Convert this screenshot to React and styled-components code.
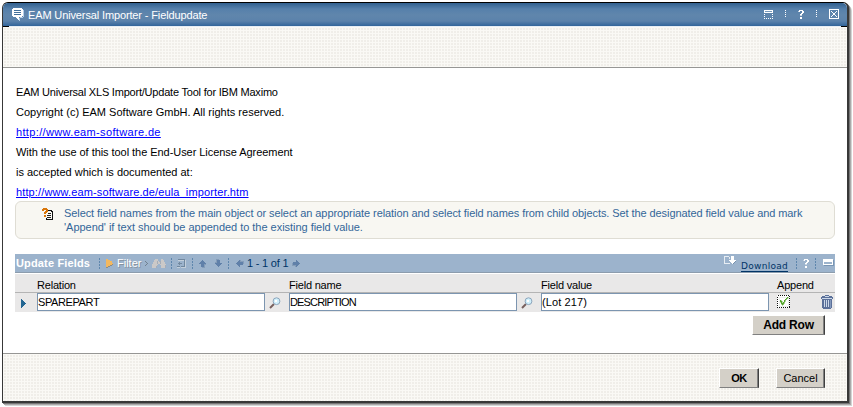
import React from "react";
import styled, { createGlobalStyle } from "styled-components";

const Global = createGlobalStyle`
  *, *::before, *::after { box-sizing: border-box; }
  body { margin: 0; background: #fff; overflow: hidden; }
  svg { display: block; flex: none; }
`;

const Page = styled.div`
  width: 853px;
  height: 407px;
  padding: 2px 0 0 2px;
  font: 11px/20px "Liberation Sans", Arial, sans-serif;
  color: #000;
`;

const Dialog = styled.div`
  width: 847px;
  height: 401px;
  display: flex;
  flex-direction: column;
  border: solid #383838;
  border-width: 1px 2px 2px 1px;
  border-top-color: #000;
  border-radius: 6px 6px 0 0;
  background: #fff;
  box-shadow: 1px 1px 0 #777, 2px 2px 0 #aaa, 3px 3px 0 #d4d4d4;
`;

const TitleBar = styled.header`
  height: 24px;
  flex: none;
  display: flex;
  align-items: center;
  padding: 0 8px 1px 9px;
  border-radius: 5px 5px 0 0;
  background:
    linear-gradient(#000, #000) 0 100% / 6px 1px no-repeat,
    linear-gradient(#000, #000) 100% 100% / 6px 1px no-repeat,
    linear-gradient(#e6edf4, #e6edf4) 0 100% / 100% 1px no-repeat,
    linear-gradient(#31608f 0, #5680ab 25%, #6086ac 50%, #5b82ab 75%, #31649a 96%);
  color: #fff;
`;

const Title = styled.span`
  flex: 1;
  margin-left: 4px;
  white-space: nowrap;
  letter-spacing: -0.13px;
`;

const TitleActions = styled.div`
  display: flex;
  align-items: center;
  gap: 12px;
  margin-bottom: 1px;
`;

const Band = styled.div`
  flex: none;
  height: ${(p) => p.$height}px;
  display: flex;
  justify-content: flex-end;
  gap: 17px;
  padding: ${(p) => p.$padding || "0"};
  border: 0 solid #969694;
  border-top-width: ${(p) => (p.$footer ? 1 : 0)}px;
  border-bottom-width: ${(p) => (p.$footer ? 0 : 1)}px;
  background-color: #f0eee9;
  background-image: linear-gradient(90deg, #faf9f5 1px, transparent 1px),
    linear-gradient(#faf9f5 1px, transparent 1px);
  background-size: 3px 3px;
`;

const Content = styled.main`
  flex: 1;
  padding: 14px 12px 0 12px;
`;

const Line = styled.div`
  height: 20px;
  padding-left: 1px;
  white-space: nowrap;
  letter-spacing: ${(p) => p.$spacing || 0}px;
`;

const Link = styled.a`
  color: #00f;
  text-decoration: underline;
  text-underline-offset: 1px;
`;

const Hint = styled.section`
  width: 820px;
  height: 38px;
  margin-top: -1px;
  display: flex;
  border: 1px solid #dfddd4;
  border-radius: 6px;
  background: #f8f7f2;
  padding: 4px 0 0 26px;
`;

const HintText = styled.div`
  margin-left: 10px;
  color: #336699;
  line-height: 14px;
  white-space: nowrap;
`;

const HintLine = styled.div`
  letter-spacing: ${(p) => p.$spacing}px;
`;

const Table = styled.section`
  width: 820px;
  margin-top: 15px;
`;

const TableBar = styled.div`
  height: 19px;
  display: flex;
  align-items: center;
  border-bottom: 1px solid #8c9cad;
  background: #9cb3cc;
`;

const Label = styled.span`
  flex: none;
  width: ${(p) => p.$width}px;
  margin-left: ${(p) => p.$left || 0}px;
  white-space: nowrap;
  line-height: 16px;
  color: ${(p) => p.$color || "#fff"};
  font-weight: ${(p) => (p.$bold ? 700 : 400)};
  letter-spacing: ${(p) => p.$spacing || 0}px;
  text-shadow: ${(p) => (p.$muted ? "1px 1px 0 #8793a0" : "none")};
`;

const Slot = styled.span`
  flex: none;
  margin-left: ${(p) => p.$left || 0}px;
  margin-top: ${(p) => p.$top || 0}px;
`;

const Divider = styled.span`
  flex: none;
  width: 1px;
  height: 11px;
  margin-left: ${(p) => p.$left}px;
  background: repeating-linear-gradient(#5e86ad 0 2px, transparent 2px 3px);
`;

const Download = styled.a`
  width: 47px;
  height: 11px;
  margin: 7px 0 0 5px;
  color: #003366;
  font: 9px/11px "DejaVu Sans", sans-serif;
  letter-spacing: 0.3px;
  white-space: nowrap;
  border-bottom: 1px solid #003366;
`;

const Grid = styled.div`
  display: grid;
  grid-template-columns: 22px 252px 252px 236px 58px;
  background: #e9e8e8;
`;

const HeadRow = styled(Grid)`
  height: 19px;
  margin-top: 1px;
  border-bottom: 1px solid #b4b4b4;
  line-height: 22px;
  letter-spacing: -0.2px;
`;

const DataRow = styled(Grid)`
  height: 19px;
`;

const Cell = styled.div`
  display: flex;
  padding-left: ${(p) => p.$left || 0}px;
  white-space: nowrap;
`;

const Field = styled.input`
  width: 228px;
  height: 18px;
  padding: 0;
  border: 1px solid #7c95b0;
  outline: 0;
  background: #fff;
  color: #000;
  font: 11px "Liberation Sans", Arial, sans-serif;
  letter-spacing: ${(p) => p.$spacing || 0}px;
`;

const Button = styled.button`
  width: ${(p) => p.$width}px;
  height: 20px;
  padding: 0;
  border: 1px solid;
  border-color: #fff #404040 #808080 #fff;
  box-shadow: inset -1px 0 #808080;
  background: #d4d0c8;
  color: #000;
  font: ${(p) => (p.$bold ? 700 : 400)} ${(p) => p.$size || 11}px/16px "Liberation Sans", Arial, sans-serif;
  letter-spacing: ${(p) => p.$spacing || 0}px;
  white-space: nowrap;
`;

const AddLine = styled.div`
  display: flex;
  justify-content: flex-end;
  padding: 3px 10px 0 0;
`;

const Art = ({ w, h, children }) => (
  <svg width={w} height={h} viewBox={`0 0 ${w} ${h}`} shapeRendering="crispEdges">{children}</svg>
);

const Chat = () => (
  <Art w={12} h={13}>
    <path d="M1 0h9v1h1v7h-1v1h-3v3h-1v-1h-1v-1h-1v-1h-3v-1h-1v-7h1z" fill="#fff" />
    <path d="M2 2h7v1h-7zM2 4h7v1h-7zM2 6h7v1h-7z" fill="#42709c" />
    <path d="M11 2h1v7h-1zM8 9h3v1h-3zM7 10h1v3h-1z" fill="#b5d0e9" />
  </Art>
);
const Dots = () => (
  <Art w={1} h={8}><path d="M0 0h1v1h-1zM0 2h1v1h-1zM0 4h1v1h-1zM0 6h1v1h-1z" fill="#fff" /></Art>
);
const WindowIcon = () => (
  <Art w={9} h={9}>
    <path d="M0 0h9v3h-9zM0 4h1v1h-1zM8 4h1v1h-1zM0 6h1v1h-1zM8 6h1v1h-1zM0 8h1v1h-1zM2 8h1v1h-1zM4 8h1v1h-1zM6 8h1v1h-1zM8 8h1v1h-1z" fill="#fff" />
    <path d="M1 1h7v1h-7z" fill="#7698b9" />
  </Art>
);
const Question = () => (
  <Art w={6} h={9}>
    <path d="M1 0h4v1h1v2h-1v1h-1v1h-2v-1h1v-1h1v-2h-2v1h-2v-1h1zM2 5h2v1h-2zM2 7h2v2h-2z" fill="#fff" />
    <path d="M0 1h1v1h-1zM2 5h2v1h-2z" fill="#c6d5e4" />
  </Art>
);
const Close = () => (
  <Art w={10} h={10}>
    <path d="M.5.5h9v9h-9z" fill="none" stroke="#fff" />
    <path d="M2 2h1v1h-1zM3 3h1v1h-1zM4 4h2v2h-2zM6 3h1v1h-1zM7 2h1v1h-1zM3 6h1v1h-1zM2 7h1v1h-1zM6 6h1v1h-1zM7 7h1v1h-1z" fill="#fff" />
  </Art>
);
const HintIcon = () => (
  <Art w={12} h={12}>
    <path d="M1 0h4v1h1v3h-1v1h-1v1h-2v-2h1v-1h1v-1h-2v1h-2v-2h1zM2 7h2v2h-2z" fill="#d9760a" />
    <path d="M6 2h4v1h1v9h-7v-2h1v1h5v-7h-1v-1h-3z" fill="#111" />
    <path d="M6 5h3v1h-3zM5 7h4v1h-4zM5 9h4v1h-4z" fill="#222" />
  </Art>
);
const FilterArrow = () => (
  <Art w={7} h={9}>
    <path d="M0 0h2v1h2v1h2v2h1v1h-1v1h-2v1h-2v1h-2z" fill="#f3b85f" />
    <path d="M0 8h2v-1h2v-1h2v-1h1v1h-1v1h-2v1h-2v1h-2z" fill="#8d8c86" />
  </Art>
);
const Chevron = () => (
  <Art w={4} h={5}><path d="M0 0h1v1h1v1h1v1h-1v1h-1v1h-1v-1h1v-1h1v-1h-1v-1h-1z" fill="#71808f" /></Art>
);
const Binoculars = () => (
  <Art w={14} h={9}>
    <path d="M3 0h3v2h1v1h1v-1h1v-2h2v1h1v2h1v2h1v4h-5v-3h-1v-1h-2v1h-1v3h-5v-4h1v-2h1v-2h1z" fill="#cbc9c8" />
    <path d="M5 2h1v3h-1zM8 2h1v3h-1zM4 7h1v2h-1zM13 6h1v3h-1z" fill="#a5adb8" />
  </Art>
);
const Clear = () => (
  <Art w={9} h={9}>
    <path d="M1 0h7v1h-7zM7 1h1v7h-1zM4 7h3v1h-3zM2 3h1v1h2v1h-2v1h-1v-1h-1v-1h1zM0 7h3v1h-3z" fill="#71889f" />
    <path d="M1 1h6v1h-6zM8 1h1v8h-1zM4 8h4v1h-4zM0 8h3v1h-3z" fill="#c3cfdb" />
  </Art>
);
const Arrow = ({ turn = 0 }) => (
  <Art w={9} h={9}>
    <g transform={`rotate(${turn} 4.5 4.5)`}>
      <path d="M4 1h1v1h1v1h1v1h1v1h-2v3h-3v-3h-2v-1h1v-1h1v-1h1z" fill="#6080a9" />
      <path d="M6 5h2v1h-1v3h-3v-1h2z" fill="#849cb8" />
    </g>
  </Art>
);
const DownloadIcon = () => (
  <Art w={12} h={10}>
    <path d="M0 0h5v1h-4v6h5v1h-6zM5 1h1v2h-1z" fill="#e7edf3" />
    <path d="M7 0h3v4h2v1h-1v1h-1v1h-1v1h-1v-1h-1v-1h-1v-1h-1v-1h2z" fill="#fff" />
    <path d="M9 8h1v-1h1v-1h1v-1h-1v1h-1v1h-1z" fill="#748fac" />
  </Art>
);
const Minimize = () => (
  <Art w={11} h={7}>
    <path d="M0 0h10v6h-10z" fill="#fff" /><path d="M1 3h8v2h-8z" fill="#9cb3cc" />
    <path d="M10 1h1v6h-10v-1h9z" fill="#7895b4" />
  </Art>
);
const RowArrow = () => (
  <Art w={5} h={9}>
    <path d="M0 0h1v1h1v1h1v1h1v1h1v1h-1v1h-1v1h-1v1h-1v1h-1z" fill="#236692" />
  </Art>
);
const Magnifier = () => (
  <svg width="12" height="12" viewBox="0 0 12 12">
    <path d="M1 11l4-4" stroke="#775f5d" strokeWidth="2" />
    <circle cx="7.5" cy="4.2" r="3.4" fill="#d2f0fb" stroke="#8ba4bb" />
    <path d="M6 3h2v2h-2z" fill="#fff" />
  </svg>
);
const Check = () => (
  <Art w={13} h={13}>
    <path d="M0 0h13v13h-13z" fill="#fff" />
    <path d="M.5.5h12v12h-12z" fill="none" stroke="#111" strokeDasharray="1 1" />
    <path d="M2 2h9v9h-9z" fill="none" stroke="#edf0ed" />
    <path d="M3 5h1v1h1v2h1v-1h1v-2h1v-1h1v-1h1v-1h1v1h-1v1h-1v1h-1v2h-1v2h-1v1h-1v-1h-1v-2h-1z" fill="#56a52b" stroke="#56a52b" strokeWidth=".4" />
  </Art>
);
const Trash = () => (
  <Art w={12} h={14}>
    <path d="M4 0h4v1h3v1h1v2h-1v9h-1v1h-8v-1h-1v-9h-1v-2h1v-1h3z" fill="#5b7099" />
    <path d="M4 1h4v1h-4zM1 3h10v1h-10zM3 5h1v7h-1zM5 5h1v7h-1zM7 5h1v7h-1z" fill="#cbd7e8" />
    <path d="M9 5h1v8h-1z" fill="#8398bc" />
  </Art>
);

export default function App() {
  return (
    <Page>
      <Global />
      <Dialog>
        <TitleBar>
          <Chat />
          <Title>EAM Universal Importer - Fieldupdate</Title>
          <TitleActions>
            <WindowIcon /><Dots /><Question /><Dots /><Close />
          </TitleActions>
        </TitleBar>
        <Band $height={41} />
        <Content>
          <Line $spacing={-0.21}>EAM Universal XLS Import/Update Tool for IBM Maximo</Line>
          <Line $spacing={0.01}>Copyright (c) EAM Software GmbH. All rights reserved.</Line>
          <Line $spacing={0.35}><Link>http://www.eam-software.de</Link></Line>
          <Line $spacing={-0.05}>With the use of this tool the End-User License Agreement</Line>
          <Line>is accepted which is documented at:</Line>
          <Line $spacing={0.13}><Link>http://www.eam-software.de/eula_importer.htm</Link></Line>
          <Hint>
            <Slot $top={2}><HintIcon /></Slot>
            <HintText>
              <HintLine $spacing={-0.08}>Select field names from the main object or select an appropriate relation and select field names from child objects. Set the designated field value and mark</HintLine>
              <HintLine $spacing={-0.03}>'Append' if text should be appended to the existing field value.</HintLine>
            </HintText>
          </Hint>
          <Table>
            <TableBar>
              <Label $bold $left={1} $width={75} $spacing={0.15}>Update Fields</Label>
              <Divider $left={8} />
              <Slot $left={6}><FilterArrow /></Slot>
              <Label $left={4} $width={25} $muted>Filter</Label>
              <Slot $left={3}><Chevron /></Slot>
              <Slot $left={3}><Binoculars /></Slot>
              <Divider $left={5} />
              <Slot $left={5}><Clear /></Slot>
              <Divider $left={6} />
              <Slot $left={5}><Arrow /></Slot>
              <Slot $left={7}><Arrow turn={180} /></Slot>
              <Divider $left={5} />
              <Slot $left={6}><Arrow turn={270} /></Slot>
              <Label $left={3} $width={42} $color="#003366" $spacing={-0.2}>1 - 1 of 1</Label>
              <Slot $left={3}><Arrow turn={90} /></Slot>
              <Slot $left={423} $top={-5}><DownloadIcon /></Slot>
              <Download>Download</Download>
              <Divider $left={8} />
              <Slot $left={6}><Question /></Slot>
              <Divider $left={6} />
              <Slot $left={7} $top={-2}><Minimize /></Slot>
            </TableBar>
            <HeadRow>
              <Cell />
              <Cell>Relation</Cell>
              <Cell>Field name</Cell>
              <Cell>Field value</Cell>
              <Cell>Append</Cell>
            </HeadRow>
            <DataRow>
              <Cell $left={6}><Slot $top={6}><RowArrow /></Slot></Cell>
              <Cell><Field defaultValue="SPAREPART" $spacing={-0.4} /><Slot $left={4} $top={4}><Magnifier /></Slot></Cell>
              <Cell><Field defaultValue="DESCRIPTION" $spacing={-0.85} /><Slot $left={4} $top={4}><Magnifier /></Slot></Cell>
              <Cell><Field defaultValue="(Lot 217)" $spacing={0.1} /></Cell>
              <Cell>
                <Slot $top={2}><Check /></Slot>
                <Slot $left={31} $top={2}><Trash /></Slot>
              </Cell>
            </DataRow>
            <AddLine><Button $bold $width={73} $size={12} $spacing={-0.2}>Add Row</Button></AddLine>
          </Table>
        </Content>
        <Band $footer $height={48} $padding="14px 22px 0 0">
          <Button $bold $width={40} $spacing={-0.5}>OK</Button>
          <Button $width={49}>Cancel</Button>
        </Band>
      </Dialog>
    </Page>
  );
}
